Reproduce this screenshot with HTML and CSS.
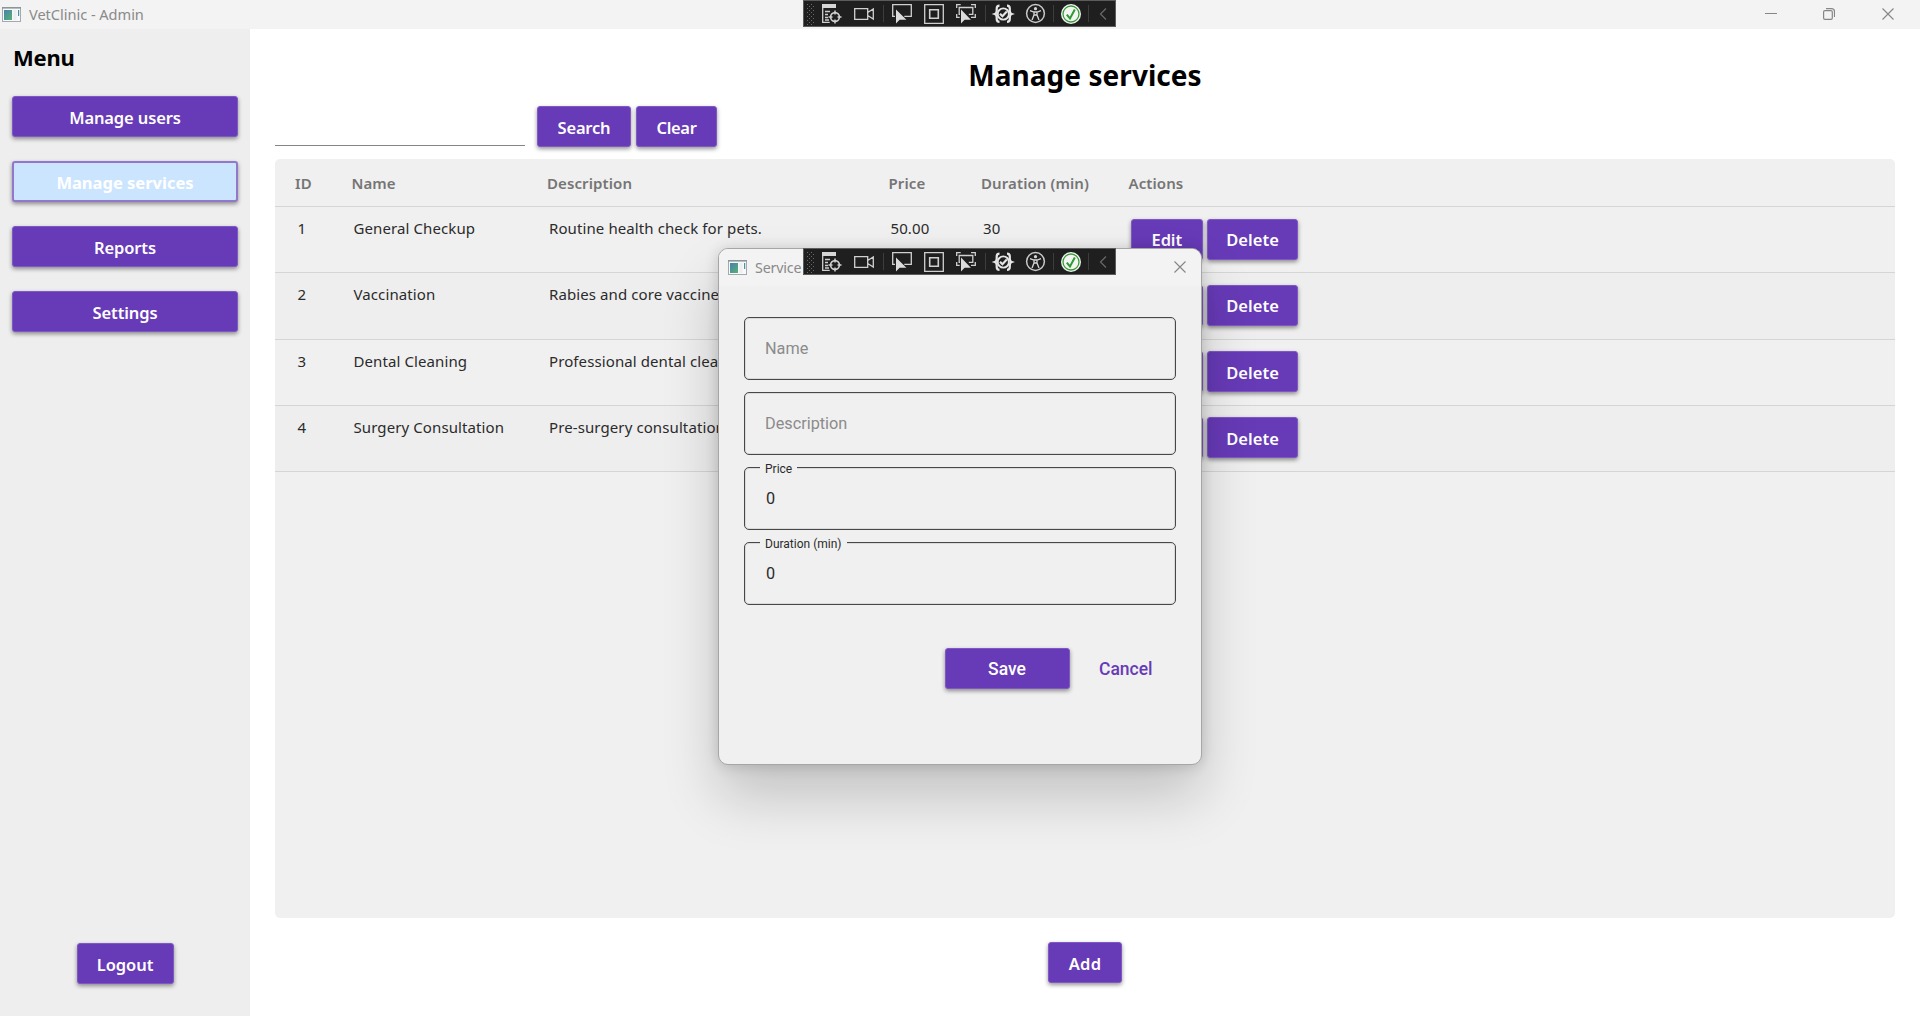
FILE: index.html
```html
<!DOCTYPE html>
<html lang="en">
<head>
<meta charset="utf-8">
<title>VetClinic - Admin</title>
<link rel="stylesheet" href="styles.css">
</head>
<body>
<svg width="0" height="0" class="defs" aria-hidden="true">
  <defs>
    <linearGradient id="teal" x1="0" y1="0" x2="1" y2="1"><stop offset="0" stop-color="#4a80ad"/><stop offset="1" stop-color="#56b274"/></linearGradient>
    <pattern id="grip" width="4" height="4" patternUnits="userSpaceOnUse"><path d="M0 0h1v1H0zM2 2h1v1H2z" fill="#6a6a6a"/></pattern>
    <symbol id="app" viewBox="0 0 19 15">
      <rect x=".5" y=".5" width="18" height="14" fill="#f7f8f9" stroke="#a3a9ae"/>
      <path d="M0 .8h19" stroke="#8d959b" stroke-width="1.6"/>
      <rect x="2" y="3" width="8" height="10" fill="url(#teal)"/>
      <path d="M11.5 3h3v10h-3z" fill="#eceeef"/>
      <path d="M16 3h1.2v6H16z" fill="#4f93a0"/>
    </symbol>
    <symbol id="close" viewBox="0 0 12 12"><path d="M.5.5l11 11M11.5.5l-11 11" stroke="#868686" stroke-width="1.1" fill="none"/></symbol>
    <symbol id="devbar" viewBox="0 0 313 27">
      <rect x=".5" y=".5" width="312" height="26" fill="#1f1f1f" stroke="#5c5c5c"/>
      <rect x="4" y="3" width="7" height="22" fill="url(#grip)"/>
      <path d="M80.500 5v17M182.500 5v17M250.500 5v17M285.500 5v17" stroke="#3d3d3d"/>
      <path d="M19 4h14v4H19z" fill="#d6d6d6"/>
      <g fill="none" stroke="#d0d0d0" stroke-width="1.3">
        <path d="M19.700 8v14.300h7M22 11.500h5M22 14.500h3M22 17.500h3M22 20h4"/>
        <circle cx="32" cy="17" r="4.400" stroke-width="1.600"/>
        <path d="M32 10.500v4M32 19.500v4M25.500 17h4M34.500 17h4" stroke-width="1.500"/>
        <path d="M51.700 8.700h13v10.600h-13zM64.700 12.500l5.600-3.500v10l-5.600-3.500"/>
        <path d="M92 16.300h-2.300V4.700h18.600v11.600h-7"/>
        <path d="M121.700 4.700h18.600v18.600h-18.600z"/>
        <path d="M126.700 9.700h8.600v8.600h-8.600z" stroke-width="1.600"/>
        <path d="M153.700 8V4.700h4M168 4.700h4.300V8M172.300 14v3.300H168M153.700 14v3.300h3"/>
        <path d="M157 14.300h-.8V7.500h13.600v6.800h-4"/>
      </g>
      <path d="M93 9.500v14l3.600-3.800h6.800zM158 9.500v14l3.600-3.800h6.300z" fill="#dcdcdc"/>
      <g fill="none" stroke="#e6e6e6" stroke-width="1.600">
        <path d="M196.500 5.700c-2.300 0-2.800 1-2.800 2.800v2c0 2-.5 3-1.900 3.500 1.400.5 1.900 1.500 1.900 3.500v1.500c0 1.800.5 2.800 2.800 2.800M204 5.700c2.300 0 2.800 1 2.800 2.800v2c0 2 .5 3 1.900 3.500-1.400.5-1.900 1.500-1.900 3.500v1.500c0 1.800-.5 2.800-2.800 2.800" stroke-width="2.200"/>
        <circle cx="200.300" cy="14" r="5.600" stroke-width="1.900"/>
        <path d="M197 13.800l2.400 2.400 4.400-4.700" stroke-width="2.200"/>
        <circle cx="232.500" cy="13.500" r="8.900" stroke="#c9c9c9" stroke-width="1.500"/>
        <path d="M227 10.700l4 1.300h3l4-1.300M231 12v3l-2 5M234 12v3l2 5M231 15h3" stroke="#d6d6d6" stroke-width="1.300"/>
      </g>
      <circle cx="232.500" cy="8.700" r="1.600" fill="#d6d6d6"/>
      <circle cx="268" cy="14" r="10" fill="#f2f5f2"/>
      <circle cx="268" cy="14" r="8" fill="none" stroke="#3a9a3a" stroke-width="1.300"/>
      <path d="M263.800 14.600l3.200 3.900 4.800-9" fill="none" stroke="#2f9a33" stroke-width="2"/>
      <path d="M303 8.500l-5.500 5.500 5.500 5.500" fill="none" stroke="#6a6a6a" stroke-width="1.200"/>
    </symbol>
  </defs>
</svg>

<header class="titlebar">
  <svg class="app-icon"><use href="#app"/></svg>
  <span class="window-title">VetClinic - Admin</span>
  <div class="window-controls">
    <svg width="12" height="12" viewBox="0 0 12 12"><path d="M0 5.500h12" stroke="#868686"/></svg>
    <svg width="12" height="12" viewBox="0 0 12 12" fill="none" stroke="#868686"><rect x=".6" y="2.700" width="8.700" height="8.700" rx="1.300" stroke-width="1.200"/><path d="M3 .6h5.500a3 3 0 0 1 3 3V9" stroke-width="1.200"/></svg>
    <svg width="12" height="12"><use href="#close"/></svg>
  </div>
</header>

<div class="layout">
  <nav class="sidebar">
    <h2 class="menu-title">Menu</h2>
    <button class="btn">Manage users</button>
    <button class="btn selected">Manage services</button>
    <button class="btn">Reports</button>
    <button class="btn">Settings</button>
    <button class="btn logout">Logout</button>
  </nav>

  <main class="content">
    <h1 class="page-title">Manage services</h1>
    <div class="search">
      <input class="search-input" type="text" aria-label="Search services">
      <button class="btn search-btn">Search</button>
      <button class="btn clear-btn">Clear</button>
    </div>

    <section class="table">
      <div class="row head"><span>ID</span><span>Name</span><span>Description</span><span>Price</span><span>Duration (min)</span><span>Actions</span></div>
      <div class="row"><span class="id">1</span><span>General Checkup</span><span>Routine health check for pets.</span><span>50.00</span><span>30</span><div class="actions"><button class="btn edit">Edit</button><button class="btn delete">Delete</button></div></div>
      <div class="row"><span class="id">2</span><span>Vaccination</span><span>Rabies and core vaccine</span><span></span><span></span><div class="actions"><button class="btn edit" aria-label="Edit"></button><button class="btn delete">Delete</button></div></div>
      <div class="row"><span class="id">3</span><span>Dental Cleaning</span><span>Professional dental clea</span><span></span><span></span><div class="actions"><button class="btn edit" aria-label="Edit"></button><button class="btn delete">Delete</button></div></div>
      <div class="row"><span class="id">4</span><span>Surgery Consultation</span><span>Pre-surgery consultation</span><span></span><span></span><div class="actions"><button class="btn edit" aria-label="Edit"></button><button class="btn delete">Delete</button></div></div>
    </section>

    <button class="btn add">Add</button>
  </main>
</div>

<svg class="devbar" width="313" height="27"><use href="#devbar"/></svg>

<div class="dialog" role="dialog" aria-label="Service">
  <div class="dialog-bar">
    <svg class="app-icon"><use href="#app"/></svg>
    <span class="dialog-title">Service</span>
    <svg class="dialog-close" width="12" height="12"><use href="#close"/></svg>
  </div>
  <form class="fields">
    <div class="field"><span class="hint">Name</span></div>
    <div class="field"><span class="hint">Description</span></div>
    <div class="field"><label class="float">Price</label><span class="value">0</span></div>
    <div class="field"><label class="float">Duration (min)</label><span class="value">0</span></div>
  </form>
  <div class="dialog-actions">
    <button class="btn save">Save</button>
    <button class="cancel">Cancel</button>
  </div>
</div>
<svg class="devbar in-dialog" width="313" height="27"><use href="#devbar"/></svg>
</body>
</html>
```

FILE: styles.css
```css
* { box-sizing: border-box; }

body {
  margin: 0;
  width: 1920px;
  height: 1016px;
  overflow: hidden;
  display: flex;
  flex-direction: column;
  background: #fff;
  font-family: "Noto Sans", sans-serif;
  font-size: 15px;
  color: #2b2b2b;
  white-space: nowrap;
}

.defs { position: absolute; }

h1, h2 { margin: 0; color: #000; font-weight: 700; }

/* Window title bar */
.titlebar {
  height: 29px;
  flex: none;
  display: flex;
  align-items: center;
  padding: 0 26px 1px 2px;
  background: #f3f3f3;
}
.app-icon { width: 19px; height: 15px; flex: none; }
.window-title {
  margin-left: 8px;
  font-size: 14.600px;
  line-height: 28px;
  letter-spacing: -0.040px;
  color: #8a8a8a;
}
.window-controls { margin-left: auto; display: flex; gap: 46px 47px; }
.window-controls svg:first-child { margin-right: -1px; }

/* Buttons */
.btn {
  height: 41px;
  padding: 1px 0 0;
  border: 1px solid #8058c4;
  border-radius: 3px;
  background: #673ab7;
  color: #fff;
  box-shadow: 0 2px 4px rgba(0, 0, 0, .42);
  font: 600 16.500px "Noto Sans", sans-serif;
  letter-spacing: -0.120px;
  flex: none;
}
.btn.selected {
  background: #cce5ff;
  border: 2px solid #9377cd;
  font-weight: 700;
  letter-spacing: 0;
}

/* Sidebar */
.layout { flex: 1; display: flex; min-height: 0; }
.sidebar {
  width: 250px;
  padding: 14px 12px 32px;
  background: #eee;
  display: flex;
  flex-direction: column;
  gap: 24px;
}
.menu-title { padding-left: 1px; font-size: 22px; line-height: 29px; letter-spacing: -0.200px; }
.logout { width: 97px; margin-top: auto; align-self: center; letter-spacing: -0.050px; }

/* Main content */
.content {
  flex: 1;
  padding: 15px 25px 0;
  display: flex;
  flex-direction: column;
}
.page-title {
  font-size: 28px;
  line-height: 62px;
  letter-spacing: .050px;
  text-align: center;
}
.search { display: flex; height: 41px; }
.search-input {
  width: 250px;
  height: 40px;
  margin-right: 12px;
  border: 0;
  border-bottom: 1px solid #858585;
  background: transparent;
}
.search-btn { width: 94px; margin-right: 5px; letter-spacing: -0.200px; }
.clear-btn { width: 81px; letter-spacing: -0.300px; }

.table {
  height: 759px;
  margin-top: 12px;
  border-radius: 5px;
  background: #f0f0f0;
}
.row {
  height: 66.250px;
  display: grid;
  grid-template-columns: 56.500px 195.500px 341.500px 92.500px 147.500px 1fr;
  padding: 10px 0 0 22px;
  border-bottom: 1.250px solid #d5d5d5;
  line-height: 22px;
  letter-spacing: .100px;
}
.row:nth-child(odd) { background: #eee; }
.row.head {
  height: 48px;
  padding: 0 0 0 20px;
  line-height: 49px;
  font-weight: 600;
  color: #757575;
  background: none;
}
.id { padding-left: .500px; }
.actions { display: flex; gap: 4px; padding-top: 1.500px; }
.actions .btn { margin-left: .300px; }
.edit { width: 72px; }
.delete { width: 91px; letter-spacing: .050px; }

.add { width: 74px; margin-top: 24px; align-self: center; letter-spacing: .200px; }

/* Developer toolbar floating over each window */
.devbar { position: absolute; left: 803px; top: 0; }
.devbar.in-dialog { top: 248px; }

/* Service dialog */
.dialog {
  position: absolute;
  left: 718px;
  top: 248px;
  width: 484px;
  height: 517px;
  border: 1px solid #a6a6a6;
  border-radius: 10px;
  background: #f0f0f0;
  box-shadow: 0 32px 56px rgba(0, 0, 0, .19), 0 1px 14px rgba(0, 0, 0, .16);
  font-family: Roboto, sans-serif;
}
.dialog-bar {
  height: 37px;
  display: flex;
  align-items: center;
  padding: 0 15px 1px 9px;
  border-radius: 9px 9px 0 0;
  background: #f3f3f3;
}
.dialog-title {
  margin-left: 8px;
  font: 14.300px "Noto Sans", sans-serif;
  letter-spacing: -0.200px;
  color: #8a8a8a;
}
.dialog-close { margin-left: auto; }
.fields {
  display: flex;
  flex-direction: column;
  gap: 12px;
  padding: 31px 25px 0;
}
.field {
  position: relative;
  height: 63px;
  padding-left: 20px;
  border: 1px solid #484848;
  border-radius: 5px;
  box-shadow: inset 0 0 0 1px rgba(0, 0, 0, .09);
  font-size: 16.250px;
  line-height: 62px;
}
.hint { color: #8b8b8b; }
.value { padding-left: 1px; }
.float {
  position: absolute;
  left: 15px;
  top: -7px;
  padding: 0 5px;
  background: #f0f0f0;
  font-size: 12px;
  line-height: 16px;
}
.dialog-actions {
  display: flex;
  align-items: center;
  gap: 29.500px;
  padding: 43px 0 0 225.500px;
}
.save, .cancel { font: 500 17.500px Roboto, sans-serif; letter-spacing: 0; }
.save { width: 125px; padding: 0; }
.cancel { padding: 0; border: 0; background: none; color: #673ab7; }
```
